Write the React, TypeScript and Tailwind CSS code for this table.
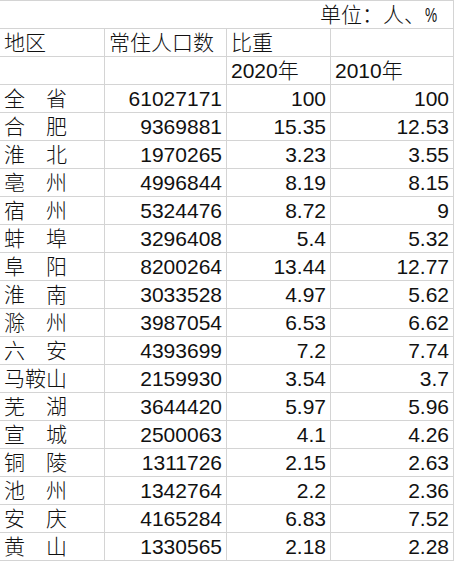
import React from 'react';

// Population table: name, population, share 2020, share 2010
const rows: [string, string, string, string][] = [
  ['全\u3000省', '61027171', '100', '100'],
  ['合\u3000肥', '9369881', '15.35', '12.53'],
  ['淮\u3000北', '1970265', '3.23', '3.55'],
  ['亳\u3000州', '4996844', '8.19', '8.15'],
  ['宿\u3000州', '5324476', '8.72', '9'],
  ['蚌\u3000埠', '3296408', '5.4', '5.32'],
  ['阜\u3000阳', '8200264', '13.44', '12.77'],
  ['淮\u3000南', '3033528', '4.97', '5.62'],
  ['滁\u3000州', '3987054', '6.53', '6.62'],
  ['六\u3000安', '4393699', '7.2', '7.74'],
  ['马鞍山', '2159930', '3.54', '3.7'],
  ['芜\u3000湖', '3644420', '5.97', '5.96'],
  ['宣\u3000城', '2500063', '4.1', '4.26'],
  ['铜\u3000陵', '1311726', '2.15', '2.63'],
  ['池\u3000州', '1342764', '2.2', '2.36'],
  ['安\u3000庆', '4165284', '6.83', '7.52'],
  ['黄\u3000山', '1330565', '2.18', '2.28'],
];

const cell = 'h-[28px] border-b border-r border-[#d4d4d4] flex items-end pb-[1px] px-[4px] whitespace-nowrap overflow-hidden';

function Cell({ children, right }: { children?: React.ReactNode; right?: boolean }) {
  return <div className={`${cell} ${right ? 'justify-end' : 'justify-start'}`}>{children}</div>;
}

export default function App() {
  return (
    <div
      className="w-[456px] h-[562px] bg-white text-[#111] text-[21px] leading-[24px] font-light overflow-hidden"
      style={{ fontFamily: '"Liberation Sans", "Noto Sans CJK SC", sans-serif' }}
    >
      <div className="w-[454px] border-t border-[#d4d4d4] grid grid-cols-[105px_122px_104px_123px]">
        <div className={`${cell} col-span-4 justify-end pr-[16px]`}>
          单位：人、<span className="w-[12px] inline-block"><span className="inline-block scale-x-[0.65] origin-left">%</span></span>
        </div>

        <Cell>地区</Cell>
        <Cell>常住人口数</Cell>
        <Cell>比重</Cell>
        <Cell />

        <Cell />
        <Cell />
        <Cell>2020年</Cell>
        <Cell>2010年</Cell>

        {rows.map(([name, pop, a, b]) => (
          <React.Fragment key={name}>
            <Cell>{name}</Cell>
            <Cell right>{pop}</Cell>
            <Cell right>{a}</Cell>
            <Cell right>{b}</Cell>
          </React.Fragment>
        ))}
      </div>
    </div>
  );
}
